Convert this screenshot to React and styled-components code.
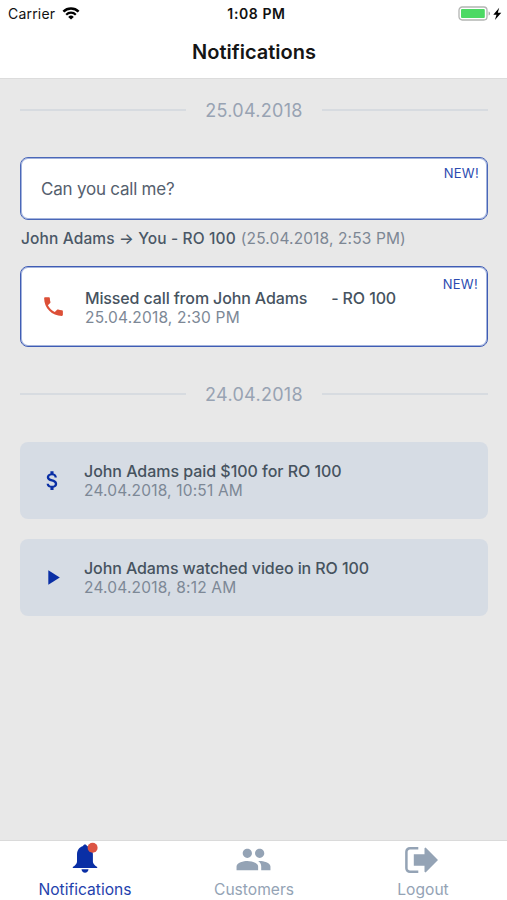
import React from 'react'
import styled, { createGlobalStyle } from 'styled-components'
import { MdAttachMoney, MdPeople, MdPhone, MdPlayArrow } from 'react-icons/md'

const App = () => {
  return (
    <>
      <GlobalStyle />
      <Screen>
        <Header>
          <StatusBar>
            <Carrier>
              <span>Carrier</span>
              <WifiIcon />
            </Carrier>
            <Clock>1:08 PM</Clock>
            <Power>
              <BatteryIcon />
            </Power>
          </StatusBar>
          <Title>Notifications</Title>
        </Header>

        <Feed>
          <DateDivider>
            <DateText>25.04.2018</DateText>
          </DateDivider>
          <MessageCard>
            <MessageText>Can you call me?</MessageText>
            <NewBadge $top={7} $right={8}>
              NEW!
            </NewBadge>
          </MessageCard>
          <Caption>
            <strong>John Adams → You - RO 100</strong>
            <time>(25.04.2018, 2:53 PM)</time>
          </Caption>
          <EventCard $unread>
            <EventIcon $color="#dc4f37">
              <MdPhone size={25} />
            </EventIcon>
            <EventBody $unread>
              <EventTitle $spacing="-0.13px">
                Missed call from John Adams
                <Gap />- RO 100
              </EventTitle>
              <EventTime>25.04.2018, 2:30 PM</EventTime>
            </EventBody>
            <NewBadge $top={9} $right={9}>
              NEW!
            </NewBadge>
          </EventCard>

          <DateDivider $second>
            <DateText>24.04.2018</DateText>
          </DateDivider>
          <EventCard>
            <EventIcon $color="#0a2fa5">
              <MdAttachMoney size={25} />
            </EventIcon>
            <EventBody>
              <EventTitle $spacing="-0.04px">John Adams paid $100 for RO 100</EventTitle>
              <EventTime>24.04.2018, 10:51 AM</EventTime>
            </EventBody>
          </EventCard>
          <EventCard>
            <EventIcon $color="#0a2fa5">
              <MdPlayArrow size={25} />
            </EventIcon>
            <EventBody>
              <EventTitle $spacing="-0.1px">John Adams watched video in RO 100</EventTitle>
              <EventTime>24.04.2018, 8:12 AM</EventTime>
            </EventBody>
          </EventCard>
        </Feed>

        <TabBar>
          <Tab $active>
            <BellIcon />
            <TabLabel>Notifications</TabLabel>
          </Tab>
          <Tab>
            <MdPeople size={37} />
            <TabLabel>Customers</TabLabel>
          </Tab>
          <Tab>
            <LogoutIcon />
            <TabLabel>Logout</TabLabel>
          </Tab>
        </TabBar>
      </Screen>
    </>
  )
}

export default App

const WifiIcon = () => (
  <svg width="18" height="14" viewBox="0 0 18 14" fill="none">
    <path d="M1.4 4.700a10.800 10.800 0 0 1 15.200 0" stroke="#000" strokeWidth="2.500" />
    <path d="M4.200 7.700a6.800 6.800 0 0 1 9.600 0" stroke="#000" strokeWidth="2.200" />
    <path d="M9 12.600 6.200 9.900a4 4 0 0 1 5.600 0z" fill="#000" />
  </svg>
)

const BatteryIcon = () => (
  <svg width="44" height="16" viewBox="0 0 44 16">
    <rect x="1" y="1" width="28" height="13" rx="3.2" fill="#fff" stroke="#b3b5b3" strokeWidth="1.3" />
    <rect x="3" y="3" width="23.8" height="9" rx="1" fill="#4cd964" />
    <path d="M30.6 5.5v4c.9-.3 1.4-1 1.4-2s-.5-1.7-1.4-2z" fill="#a5a7a5" />
    <path d="M41.200 1.700 35.300 8.700h3.200L36.900 14 43.300 6.700h-3.500z" fill="#000" />
  </svg>
)

const BellIcon = () => (
  <svg width="26" height="36" viewBox="0 0 26 36">
    <path
      d="M13 2.600c1 0 1.700.6 1.900 1.400 3.900 1 6 4.200 6 8.400v7.200c0 2 1.500 3.700 4.300 5.500v1H.8v-1c2.800-1.800 4.200-3.500 4.200-5.500v-7.200c0-4.200 2.300-7.400 6.100-8.400.2-.8.9-1.400 1.900-1.400z"
      fill="#0a2fa5"
    />
    <path d="M9.500 27.300h7c-.2 2.100-1.600 3.400-3.500 3.400s-3.300-1.300-3.500-3.400z" fill="#0a2fa5" />
    <circle cx="20.600" cy="5.800" r="5" fill="#dc5444" />
  </svg>
)

const LogoutIcon = () => (
  <svg width="38" height="28" viewBox="0 0 38 28">
    <path
      d="M14.300 2.200H6a3.600 3.600 0 0 0-3.600 3.600v16.400A3.600 3.600 0 0 0 6 25.800h8.300"
      fill="none"
      stroke="currentColor"
      strokeWidth="2.5"
    />
    <path d="M9.800 8.200h10.700V2.200l1.100-.6L34 14 21.600 26.400l-1.100-.6v-6H9.800z" fill="currentColor" />
  </svg>
)

const GlobalStyle = createGlobalStyle`
  * {
    box-sizing: border-box;
  }

  body {
    margin: 0;
    font-family: 'Inter', sans-serif;
    background: #e8e8e8;
  }

  svg {
    display: block;
    flex-shrink: 0;
  }
`

const Screen = styled.div`
  display: flex;
  flex-direction: column;
  height: 900px;
  overflow: hidden;
`

const Header = styled.header`
  height: 79px;
  background: #fff;
  border-bottom: 1px solid #dcdcdc;
`

const StatusBar = styled.div`
  display: grid;
  grid-template-columns: 1fr auto 1fr;
  align-items: center;
  height: 27px;
  padding: 0 5px 0 8px;
  font-size: 14px;
  color: #111;
`

const Carrier = styled.div`
  display: flex;
  align-items: center;
  gap: 7px;
  letter-spacing: 0.2px;
`

const Clock = styled.span`
  padding-left: 3px;
  font-weight: 600;
  letter-spacing: 0.6px;
`

const Power = styled.div`
  display: flex;
  justify-content: flex-end;
`

const Title = styled.h1`
  margin: 11px 0 0;
  padding-left: 1px;
  font-size: 20px;
  font-weight: 600;
  line-height: 28px;
  text-align: center;
  color: #151515;
`

const Feed = styled.main`
  flex: 1;
  padding: 0 19px 0 20px;
`

const DateDivider = styled.div`
  display: flex;
  align-items: center;
  gap: 19px;
  height: 24px;
  margin-top: ${({ $second }) => ($second ? '35px' : '19px')};
  margin-bottom: ${({ $second }) => ($second ? '36px' : '35px')};

  &::before,
  &::after {
    content: '';
    flex: 1;
    height: 2px;
    background: #d7dbe0;
  }
`

const DateText = styled.span`
  font-size: 18px;
  letter-spacing: 0.3px;
  color: #98a3b3;
`

const MessageCard = styled.div`
  position: relative;
  display: flex;
  align-items: center;
  height: 63px;
  padding: 0 20px;
  background: #fff;
  border: 1px solid #4a67b8;
  border-radius: 8px;
  box-shadow: inset 0 0 0 1px #a3b3dc;
`

const MessageText = styled.p`
  margin: 0;
  font-size: 17px;
  letter-spacing: -0.22px;
  color: #55606e;
`

const NewBadge = styled.span`
  position: absolute;
  top: ${({ $top }) => $top}px;
  right: ${({ $right }) => $right}px;
  font-size: 13px;
  line-height: 16px;
  letter-spacing: 0.3px;
  color: #2b4bb0;
`

const Caption = styled.p`
  display: flex;
  gap: 5px;
  margin: 8px 0 17px;
  padding-left: 1px;
  font-size: 15.5px;
  line-height: 21px;
  letter-spacing: 0.13px;
  white-space: nowrap;
  color: #7d8794;

  strong {
    font-weight: 500;
    color: #4a5766;
  }
`

const EventCard = styled.div`
  position: relative;
  display: flex;
  align-items: center;
  height: ${({ $unread }) => ($unread ? '81px' : '77px')};
  padding-left: 20px;
  background: ${({ $unread }) => ($unread ? '#fff' : '#d6dce4')};
  border: ${({ $unread }) => ($unread ? '1px solid #3f5cb4' : 'none')};
  border-radius: 8px;
  box-shadow: ${({ $unread }) => ($unread ? 'inset 0 0 0 1px #a3b3dc' : 'none')};

  & + & {
    margin-top: 20px;
  }
`

const EventIcon = styled.span`
  width: 44px;
  color: ${({ $color }) => $color};
`

const EventBody = styled.div`
  padding-top: ${({ $unread }) => ($unread ? '1px' : '0')};
`

const EventTitle = styled.p`
  margin: 0;
  font-size: 16px;
  font-weight: 500;
  line-height: 20px;
  letter-spacing: ${({ $spacing }) => $spacing || 'normal'};
  white-space: nowrap;
  color: #46535f;
`

const Gap = styled.span`
  display: inline-block;
  width: 24px;
`

const EventTime = styled.p`
  margin: 0;
  font-size: 15.5px;
  line-height: 19px;
  letter-spacing: 0.18px;
  white-space: nowrap;
  color: #7d8896;
`

const TabBar = styled.nav`
  display: grid;
  grid-template-columns: repeat(3, 1fr);
  height: 60px;
  background: #fff;
  border-top: 1px solid #dadada;
`

const Tab = styled.div`
  display: grid;
  grid-template-rows: 37px 22px;
  justify-items: center;
  align-items: center;
  color: ${({ $active }) => ($active ? '#1f42ad' : '#94a3b5')};
`

const TabLabel = styled.span`
  padding-left: 1px;
  font-size: 15.6px;
`
